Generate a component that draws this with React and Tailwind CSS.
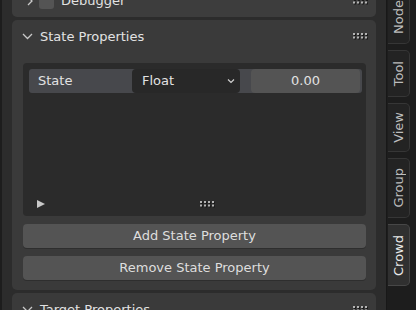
function Grip() {
  const xs = [0, 4, 8, 12];
  return (
    <svg width="15" height="7" viewBox="0 0 15 7">
      {[0, 3.5].map((y) =>
        xs.map((x) => (
          <g key={`${x}-${y}`}>
            <rect x={x + 1} y={y + 1} width="2" height="2" fill="#1a1a1a" />
            <rect x={x} y={y} width="2" height="2" fill="#b4b4b4" />
          </g>
        ))
      )}
    </svg>
  );
}

function ChevronDown({ size = 11 }) {
  return (
    <svg width={size} height="7" viewBox="0 0 11 7" fill="none">
      <path d="M1 1 L5.5 5.5 L10 1" stroke="#c8c8c8" strokeWidth="1.3" />
    </svg>
  );
}

function Tab({ label, h, active }) {
  return (
    <div
      className={`ml-[1px] flex w-[22px] shrink-0 items-center justify-center rounded-r-[5px] border border-l-0 ${
        active ? "border-[#474747] bg-[#303030] text-[#e8e8e8]" : "border-[#363636] bg-[#232323] text-[#bdbdbd]"
      }`}
      style={{ height: h }}
    >
      <span className="rotate-180 text-[13px] leading-none [writing-mode:vertical-rl]">{label}</span>
    </div>
  );
}

export default function App() {
  return (
    <div className="flex h-[310px] w-[416px] overflow-hidden bg-[#1d1d1d] font-['DejaVu_Sans',sans-serif] text-[13px] text-[#e2e2e2]">
      {/* properties region */}
      <div className="ml-[2px] w-[384px] shrink-0 overflow-hidden bg-[#2c2c2c] px-[10px]">
        <div className="-mt-[15px] flex flex-col gap-[3px]">
          {/* Debugger (collapsed) */}
          <div className="flex h-[32px] items-center rounded-[5px] bg-[#3d3d3d] pl-[14px] pr-[8px]">
            <svg width="8" height="10" viewBox="0 0 8 10" fill="none">
              <path d="M2 1 L6 5 L2 9" stroke="#c8c8c8" strokeWidth="1.3" />
            </svg>
            <div className="ml-[5px] h-[15px] w-[15px] rounded-[3px] bg-[#545454]" />
            <span className="ml-[7px]">Debugger</span>
            <div className="ml-auto">
              <Grip />
            </div>
          </div>

          {/* State Properties */}
          <div className="rounded-[5px] bg-[#3a3a3a]">
            <div className="flex h-[32px] items-center pl-[10px] pr-[8px] pt-[1px]">
              <ChevronDown />
              <span className="ml-[7px]">State Properties</span>
              <div className="ml-auto">
                <Grip />
              </div>
            </div>
            <div className="pb-[10px] pl-[11px] pr-[10px] pt-[11px]">
              <div className="flex h-[153px] flex-col rounded-[4px] bg-[#2b2b2b] pl-[6px] pr-[4px] pt-[6px]">
                <div className="flex h-[24px] items-stretch rounded-[3px] bg-[#47484c] pr-[1px]">
                  <div className="flex w-[103px] items-center pl-[9px]">State</div>
                  <div className="flex w-[108px] items-center justify-between rounded-[4px] bg-[#282828] pl-[10px] pr-[5px]">
                    <span>Float</span>
                    <svg width="8" height="6" viewBox="0 0 8 6" fill="none">
                      <path d="M1 1.5 L4 4.5 L7 1.5" stroke="#d0d0d0" strokeWidth="1.2" />
                    </svg>
                  </div>
                  <div className="ml-[11px] flex w-[109px] items-center justify-center rounded-[4px] bg-[#545454]">0.00</div>
                </div>
                <div className="flex-1" />
                <div className="relative flex h-[24px] items-center pl-[8px]">
                  <svg width="9" height="8" viewBox="0 0 9 8">
                    <path d="M0 0 L8 4 L0 8 Z" fill="#c8c8c8" />
                  </svg>
                  <div className="absolute left-[171px] top-[9px]">
                    <Grip />
                  </div>
                </div>
              </div>
              <div className="mt-[8px] flex h-[24px] items-center justify-center rounded-[4px] bg-[#545454] shadow-[0_1px_0_#2e2e2e] text-[#dedede]">
                Add State Property
              </div>
              <div className="mt-[8px] flex h-[24px] items-center justify-center rounded-[4px] bg-[#545454] shadow-[0_1px_0_#2e2e2e] text-[#dedede]">
                Remove State Property
              </div>
            </div>
          </div>

          {/* Target Properties */}
          <div className="rounded-[5px] bg-[#3a3a3a]">
            <div className="flex h-[32px] items-center pl-[10px] pr-[8px] pt-[1px]">
              <ChevronDown />
              <span className="ml-[7px]">Target Properties</span>
              <div className="ml-auto">
                <Grip />
              </div>
            </div>
          </div>
        </div>
      </div>

      {/* tab strip */}
      <div className="flex w-[30px] shrink-0 flex-col gap-[6px] border-l border-[#181818] -mt-[10px]">
        <Tab label="Node" h={54} />
        <Tab label="Tool" h={47} />
        <Tab label="View" h={49} />
        <Tab label="Group" h={60} />
        <Tab label="Crowd" h={62} active />
      </div>
    </div>
  );
}
